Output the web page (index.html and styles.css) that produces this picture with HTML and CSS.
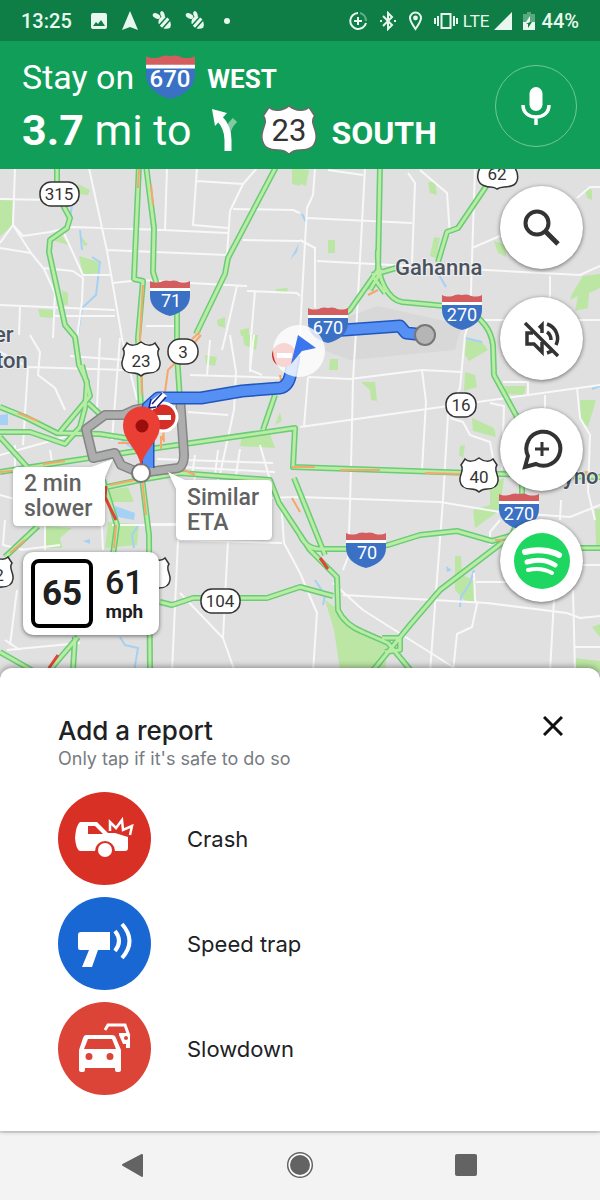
FILE: index.html
```html
<!DOCTYPE html>
<html lang="en">
<head>
<meta charset="utf-8">
<meta name="viewport" content="width=device-width, initial-scale=1">
<title>Navigation</title>
<link rel="stylesheet" href="styles.css">
</head>
<body>
<svg class="symbols" aria-hidden="true">
  <symbol id="interstate" viewBox="0 0 42 36">
    <path fill="#3a71c5" d="M1 10H41V16C41 26 33 33 21 36C9 33 1 26 1 16Z"/>
    <path fill="#d45d60" d="M1 1C5 3 10 3 14 1Q17 0 21 1Q25 0 28 1C32 3 37 3 41 1V9H1Z"/>
    <path fill="#fff" d="M1 8H41V11H1Z"/>
  </symbol>
  <symbol id="us-route" viewBox="0 0 42 38">
    <path d="M7 3C10 6 16 6 21 2C26 6 32 6 35 3L39 9C35 14 41 18 40 25C39 32 34 33 29 33C25 33 23 34 21 36C19 34 17 33 13 33C8 33 3 32 2 25C1 18 7 14 3 9Z"/>
  </symbol>
  <symbol id="bee" viewBox="0 0 20 20">
    <ellipse cx="4.500" cy="5" rx="4" ry="2.500" transform="rotate(25 4.500 5)" fill="currentColor"/>
    <ellipse cx="10.500" cy="3.500" rx="2" ry="3.500" transform="rotate(-20 10.500 3.500)" fill="currentColor"/>
    <g transform="rotate(42 13 12)"><path fill="currentColor" d="M7 9Q8 7 9.500 7V17Q8 17 7 15Q5 12 7 9ZM11 6.500H14V17.500H11ZM15.500 7Q19 9 20 12Q19 15 15.500 17Z"/></g>
  </symbol>
</svg>

<div class="phone">
  <div class="status">
    <span class="status-time">13:25</span>
    <div class="status-group status-left">
      <svg width="18" height="18" viewBox="0 0 18 18"><path fill="currentColor" fill-rule="evenodd" d="M3 1H15Q17 1 17 3V15Q17 17 15 17H3Q1 17 1 15V3Q1 1 3 1ZM3 14H15L11 8L8 12L6 10Z"/></svg>
      <svg width="18" height="20" viewBox="0 0 18 20"><path fill="currentColor" d="M9 0L17 19L9 16L1 19Z"/></svg>
      <svg width="20" height="20"><use href="#bee"/></svg>
      <svg width="20" height="20"><use href="#bee"/></svg>
      <svg width="18" height="18" viewBox="0 0 18 18"><circle cx="9" cy="9" r="3" fill="currentColor"/></svg>
    </div>
    <div class="status-group status-right">
      <svg width="20" height="20" viewBox="0 0 20 20" fill="none" stroke="currentColor" stroke-width="2"><path d="M10 2A8 8 0 1 0 18 12M10 6V14M6 10H14"/><path opacity=".4" d="M12 2A8 8 0 0 1 18 10"/></svg>
      <svg width="18" height="20" viewBox="0 0 18 20" fill="none" stroke="currentColor" stroke-width="2"><path d="M4 5L13 14L9 18V2L13 6L4 15M1 10H3M15 10H17"/></svg>
      <svg width="15" height="20" viewBox="0 0 15 20"><path fill="none" stroke="currentColor" stroke-width="2" d="M7.500 18C4 13 2 10 2 7A5.500 5.500 0 0 1 13 7C13 10 11 13 7.500 18Z"/><circle cx="7.500" cy="7" r="2.400" fill="currentColor"/></svg>
      <svg width="24" height="20" viewBox="0 0 24 20" fill="none" stroke="currentColor" stroke-width="2"><rect x="7.500" y="3" width="9" height="14"/><path d="M4 5V15M1 7V13M20 5V15M23 7V13"/></svg>
      <span class="status-lte">LTE</span>
      <svg width="18" height="18" viewBox="0 0 18 18"><path fill="currentColor" d="M18 0V18H0Z"/></svg>
      <svg width="12" height="20" viewBox="0 0 12 20"><path opacity=".35" fill="currentColor" d="M4 1H8V3H12V11H0V3H4Z"/><path fill="currentColor" d="M0 11H12V19H0Z"/><path fill="#0e7e46" d="M7 11H9L5 17V13H3Z"/><path fill="currentColor" d="M7 5V11H3Z"/></svg>
      <span class="status-percent">44%</span>
    </div>
  </div>

  <header class="directions">
    <div class="steps">
      <div class="step step-now">
        <span>Stay on</span>
        <svg width="53" height="44" viewBox="0 0 53 44" class="step-shield"><use href="#interstate" width="53" height="44"/><text x="26" y="32">670</text></svg>
        <b>WEST</b>
      </div>
      <div class="step step-next">
        <span><b>3.7</b> mi to</span>
        <svg class="turn" width="28" height="44" viewBox="0 0 28 44" fill="none"><path stroke="#85c9a3" stroke-width="6" d="M16 28C17 19 20 16 24 12"/><path stroke="#fff" stroke-width="7" d="M17 43V32C17 22 14 16 8 10"/><path fill="#fff" d="M1 1L16 5L4 18Z"/></svg>
        <svg class="step-us" width="60" height="54" viewBox="0 0 60 54"><use href="#us-route" width="60" height="54"/><text x="30" y="38">23</text></svg>
        <b class="south">SOUTH</b>
      </div>
    </div>
    <button class="mic" aria-label="Voice search">
      <svg width="32" height="42" viewBox="0 0 32 42" fill="none"><rect x="9.500" y="2" width="13" height="24" rx="6.500" fill="#fff"/><path stroke="#fff" stroke-width="3.500" d="M3 20C3 28 9 32 16 32S29 28 29 20M16 32V40"/></svg>
    </button>
  </header>

  <main class="map">
    <svg class="map-canvas" viewBox="0 169 600 511" preserveAspectRatio="xMidYMin slice" role="img" aria-label="Map with the route to downtown">
      <defs>
        <g id="highways">
          <path d="M57 165V190L64 207L70 218L67 228L50 240L49 252L65 325L75 337L79 365L87 382L85 408L80 427L65 444L30 432L0 432"/>
          <path d="M139 165L134 279L143 281L138 338L141 410M141 470L149 535L150 672"/>
          <path d="M146 165L154 228L153 272L157 285M177 310V355L180 400"/>
          <path d="M277 165L228 258L225 274L196 334M275 395L263 430"/>
          <path d="M380 165L378 270L350 310L330 325M378 250C376 282 390 300 402 302L445 306L466 310Q490 322 493 345L494 375L517 417L522 480V510L512 535M374 278L385 293M382 270L370 290M372 275L396 268"/>
          <path d="M487 185L458 228L447 232L438 262"/>
          <path d="M0 472L63 462L150 449L295 428L293 467L500 474L600 477"/>
          <path d="M0 407L25 417L57 433L100 434L145 441M0 437L30 470M60 432L90 396L82 365M88 403L103 417"/>
          <path d="M107 487L140 480L180 473L270 480L279 503L310 550L337 577L338 610Q345 625 363 632L388 643L412 672M294 478L325 555M300 535Q306 548 318 549L345 549L388 545L420 535L457 531L492 541L520 533M503 542L440 590L410 625L375 668L370 672M382 638H400V650L385 652"/>
          <path d="M160 602L172 605L193 598H267L300 587L333 596M580 548H600"/>
          <path d="M0 652L35 672M78 637L48 672M75 637L73 670M38 526L5 557M103 480L117 525L113 555"/>
        </g>
      </defs>
      <rect y="160" width="600" height="530" fill="#e0e0e0"/>
      <path fill="#d8d8d8" d="M350 316L378 306L462 325L455 350L350 360L310 345Z"/>
      <g fill="#bce6a4">
        <path d="M0 200L13 200L12 226L0 236ZM78 184L90 190L88 195L79 194ZM80 235L88 245L84 246ZM54 241L62 236L69 245ZM79 256L99 262L98 273L83 275ZM62 290L68 293V305L63 305ZM38 309L54 310V318L40 317ZM292 169H300V186L292 184ZM300 169L309 170L306 186L300 184ZM217 320L225 317V328L218 326ZM275 289L288 288L287 292L276 291ZM240 330L249 328V336H241Z"/>
        <path d="M428 182L435 182L437 195L430 193ZM328 240H335V253H328ZM434 237L440 238L436 258L430 256ZM494 241L505 244L506 257L498 253ZM585 188L592 190V200L587 198ZM572 294L583 276L600 274V288L589 293L588 308L575 311L578 296L570 300ZM330 359H338V370H329ZM361 382H375L377 401L371 400L370 390ZM466 340L482 342L488 350L469 361L465 355ZM465 372L475 375L477 387L464 391ZM504 386H526L524 395L506 394ZM472 418L494 428L496 437L473 431ZM460 446L465 445L463 458L459 455ZM580 400L596 400L588 427L581 421ZM490 483L504 478L500 510L475 528L473 510L490 505Z"/>
        <path d="M325 600L342 612Q354 633 387 646L385 672L340 670L334 630ZM455 556H461L462 575L474 580L475 603L464 600L455 590ZM575 658L600 661V672H575ZM592 627L600 624V637ZM46 526L72 528L60 538L62 548H46ZM108 522L139 524L137 545L105 548ZM110 490L128 487L134 502H108ZM242 436L270 434L275 448L240 446ZM275 425L280 412L282 421ZM205 355L217 357L215 366L206 364ZM243 335L258 335L256 350L244 345ZM595 509H600V545H596Z"/>
      </g>
      <g fill="#a4d1f4">
        <path d="M290 260L299 243L297 252ZM115 506L135 513L134 520L112 516ZM83 541L90 539V544ZM446 566L452 570L447 572ZM98 452L108 449L110 459L100 462ZM0 415L8 414V425H0Z"/>
        <path class="river" d="M72 205L69 225M80 230L82 250M92 257L100 262L96 295L82 308L78 333M302 214L306 222M439 275L446 287M474 570L470 583L461 597L460 607M139 524L132 535L134 548M120 637L125 645L138 648L134 672M592 389L600 386M115 435L135 450M465 338L482 342M315 580L325 595L323 605"/>
      </g>
      <g class="streets">
        <path d="M15 168L13 225L31 253L44 269L55 293L53 338M89 168L107 251L122 338L137 400M0 248L31 253M0 199L50 200M0 243L13 225L23 236L50 232L72 227L163 230L228 233M107 250L227 255M167 168L165 230M197 168L193 225L228 228M197 181L243 184L257 168M243 184L230 211L227 255M233 209L293 210L300 213M243 240L300 241M113 283L140 280L190 283L247 286M247 291L297 293L300 296M255 291L251 338L250 372M237 286L225 338L222 350M43 268L73 271L83 278L82 301L77 338M63 231L83 275L110 275M0 305L115 310M20 307L19 335M55 316L115 316M146 326H174"/>
        <path d="M315 168L313 195L307 208L302 295L300 335M365 168L357 315L353 380L352 425L350 505L348 557L343 570M307 218L412 223M328 170L363 175M408 173L415 183L412 263M420 170L447 193L450 235M475 168L470 320L465 335L460 388L448 415L443 500L430 672M472 248L500 236M317 261L580 275L600 266M300 240L315 248V308M550 276V297M577 198L590 187H600M482 320H600"/>
        <path d="M300 427L427 409L600 385M308 377L350 379L422 370L462 372M308 377L304 427M422 370L426 402L422 470M450 418L463 422L470 435L490 442L493 458M190 500L300 497L440 502L500 512L570 517L600 505M577 388L580 418L590 435L588 492L595 520M490 403L504 406L502 470M545 395V430M503 382H528V394M343 595L487 603L567 613L580 618L600 616M333 583L363 610L453 667M300 573L317 613L313 672M474 573L475 600L477 604L472 627L457 634L453 672M476 582H545M573 590L575 672M554 600L550 672M574 647H600M561 500L560 520M500 520L490 532V545M580 565H600"/>
        <path d="M0 352L28 367L125 370M70 356L123 360M30 335L40 352L38 375L55 388L65 410M28 367L23 445M100 338L97 408M120 338L112 440M190 375L285 378M230 335L236 372L234 410L220 474M254 335L250 370L262 375M210 340L207 375M157 459L273 463M180 467L275 472M195 455L192 475M218 450L215 475M240 449L236 475M260 445L270 480M0 455L90 430M50 450L55 480M15 445V470M178 540L172 672M228 540L223 638M180 593L223 638L235 672M150 524H180M180 540L282 543M281 500L284 543L300 573M7 650L80 643M17 590L10 645M5 520L3 545L25 550M45 490V550M0 495L18 500M100 490L103 550M5 640L20 650M195 477L192 492M218 476V485M112 525H180M188 412L228 415M60 545L20 550M60 500L62 520"/>
      </g>
      <use href="#highways" class="casing"/>
      <use href="#highways" class="core"/>
      <g class="slow">
        <path d="M139 169L138 188M151 185L153 205M143 285L140 337L142 395M201 335L188 350L168 370L165 392M192 339L200 332M18 413L38 421M43 464L65 461M0 472L12 471M292 467H315M340 470L380 470M425 473L460 474M580 473L588 472M283 390L280 375M118 443L135 443M162 440L165 428M110 485L135 480M180 468L195 475M25 540L10 553M116 525L114 548M142 478L146 515M292 498L300 512M162 415L164 442M495 540L503 540M161 449V436M368 295L378 290"/>
      </g>
      <path class="jam" d="M106 486L105 497L116 520M320 558L328 569M58 655L49 668"/>

      <g class="alternate"><path class="alt-casing" d="M150 407L134 410L123 415L105 415L86 429L93 458L115 453L121 465L140 473L178 468Q184 466 184 454L180 398"/><path class="alt-core" d="M150 407L134 410L123 415L105 415L86 429L93 458L115 453L121 465L140 473L178 468Q184 466 184 454L180 398"/></g>
      <g class="route">
        <path class="route-casing" d="M148 468V407L158 398L201 398L242 391L280 388Q289 386 291 372L294 355M330 331L400 326L406 333L425 335"/>
        <path class="route-core" d="M148 468V407L158 398L201 398L242 391L280 388Q289 386 291 372L294 355M330 331L400 326L406 333L425 335"/>
      </g>
      <circle cx="425" cy="335" r="10" fill="#b5b5b5" stroke="#777" stroke-width="2"/>

      <g class="town"><text x="395" y="275">Gahanna</text><text x="-6" y="342">er</text><text x="-4" y="368">ton</text><text x="563" y="484">yno</text></g>

      <g class="interstates">
        <use href="#interstate" x="149" y="280" width="42" height="36"/><text x="171" y="307">71</text>
        <use href="#interstate" x="307" y="307" width="42" height="36"/><text x="328" y="334">670</text>
        <use href="#interstate" x="441" y="294" width="42" height="36"/><text x="462" y="321">270</text>
        <use href="#interstate" x="345" y="532" width="42" height="36"/><text x="367" y="559">70</text>
        <use href="#interstate" x="498" y="493" width="42" height="36"/><text x="519" y="520">270</text>
      </g>
      <g class="plates">
        <use href="#us-route" x="120" y="340" width="42" height="38"/><text x="141" y="367">23</text>
        <use href="#us-route" x="458" y="456" width="42" height="38"/><text x="479" y="483">40</text>
        <use href="#us-route" x="130" y="555" width="42" height="38"/>
        <use href="#us-route" x="-27" y="554" width="42" height="38"/><text x="-1" y="581">2</text>
        <rect x="40" y="182" width="39" height="24" rx="11"/><text x="59" y="200">315</text>
        <rect x="168" y="339" width="30" height="25" rx="12"/><text x="183" y="358">3</text>
        <rect x="446" y="393" width="30" height="24" rx="11"/><text x="461" y="411">16</text>
        <rect x="201" y="589" width="39" height="24" rx="11"/><text x="220" y="607">104</text>
        <path d="M482 165C475 174 477 184 485 186C490 188 493 186 497 189C502 186 505 188 511 186C519 184 520 174 513 165Z"/><text x="497" y="180">62</text>
      </g>

      <circle cx="163" cy="417" r="14" fill="#d42e27" stroke="#fff" stroke-width="3"/><path fill="#fff" d="M156 415H171V420H156Z"/>
      <path fill="#fff" d="M162 392L167 396L155 409L149 407L151 401Z"/><path fill="none" stroke="#12238c" stroke-width="1.500" d="M162 393L152 404M166 397L157 407M151 399L149 408L156 407"/>
      <circle cx="141" cy="473" r="9" fill="#fff" stroke="#777" stroke-width="2"/>
      <path fill="#ea3f34" d="M141 467C139 449 123 442 123 425A18 18 0 0 1 160 425C160 442 144 449 141 467Z"/><circle cx="142" cy="426" r="6.500" fill="#9c0e0c"/>

      <circle cx="284" cy="355" r="12" fill="#d42e27"/><path fill="#fff" d="M277 353H292V358H277Z"/>
      <circle class="puck" cx="299" cy="351" r="26"/><path fill="#3b76ef" d="M298 335L316 348L302 351L291 364Z"/>

      <g class="callout">
        <path d="M18 467H91L113 459L105 477V521Q105 526 100 526H18Q13 526 13 521V472Q13 467 18 467Z"/>
        <text x="24" y="491">2 min</text><text x="24" y="516">slower</text>
        <path d="M176 489L168 472L185 480H267Q272 480 272 485V535Q272 540 267 540H181Q176 540 176 535Z"/>
        <text x="187" y="505">Similar</text><text x="187" y="530">ETA</text>
      </g>
    </svg>

    <div class="speed">
      <span class="limit">65</span>
      <span class="current"><b>61</b><small>mph</small></span>
    </div>

    <div class="map-actions">
      <button aria-label="Search"><svg width="42" height="42" viewBox="0 0 42 42" fill="none" stroke="currentColor"><circle cx="16" cy="16" r="11.500" stroke-width="4"/><path stroke-width="5" d="M24 24L37 37"/></svg></button>
      <button aria-label="Sound off"><svg width="42" height="42" viewBox="0 0 42 42" fill="none" stroke="currentColor" stroke-width="3.500"><path d="M4 5L37 38M18 10L21 7V15M12 15H6V26H13L21 34V24M26 6C35 9 39 19 35 27M26 35C29 34 31 33 32 32M26 14C29 16 30 19 30 22"/></svg></button>
      <button aria-label="Add a report"><svg width="42" height="42" viewBox="0 0 42 42" fill="none" stroke="currentColor"><path stroke-width="4" d="M4 38L7 27A17 17 0 1 1 15 35Z"/><path stroke-width="3" d="M21 13V27M14 20H28"/></svg></button>
      <button aria-label="Spotify"><svg width="58" height="58" viewBox="0 0 58 58" fill="none" stroke="#fff" stroke-linecap="round"><circle cx="29" cy="29" r="28" fill="#1ed760" stroke="none"/><path stroke-width="6" d="M12 20C23 17 37 18 46 23"/><path stroke-width="5" d="M14 30C24 27 34 28 42 33"/><path stroke-width="4" d="M15 38C24 36 32 37 39 41"/></svg></button>
    </div>
  </main>

  <section class="report">
    <div class="report-head">
      <div>
        <h1>Add a report</h1>
        <p>Only tap if it's safe to do so</p>
      </div>
      <button class="close" aria-label="Close"><svg width="20" height="20" viewBox="0 0 20 20" fill="none" stroke="currentColor" stroke-width="3"><path d="M1 1L19 19M19 1L1 19"/></svg></button>
    </div>
    <div class="report-list">
      <button class="report-item">
        <svg class="crash" viewBox="0 0 93 93"><path fill="#fff" fill-rule="evenodd" d="M22 30H39L50 41H57L70 45V56Q70 59 67 59H57A10 10 0 0 0 37 59H22Q18 58 17 46Q18 33 22 30ZM30 34V42H45L37 34Z"/><circle cx="47" cy="58" r="7" fill="#fff"/><path fill="none" stroke="#fff" stroke-width="2.500" d="M52 39V30L58 36L64 28L65 38L74 34L72 43"/></svg>
        <span>Crash</span>
      </button>
      <button class="report-item">
        <svg class="trap" viewBox="0 0 93 93"><path fill="#fff" d="M23 35H52V53H40L34 70H24L31 53H22Q20 53 20 51V38Q20 35 23 35Z"/><path fill="none" stroke="#fff" stroke-width="4" d="M57 34Q65 44 57 54M64 27Q79 44 64 61"/></svg>
        <span>Speed trap</span>
      </button>
      <button class="report-item">
        <svg class="slowdown" viewBox="0 0 93 93"><path fill="#fff" fill-rule="evenodd" d="M28 33H54Q57 33 58 36L63 48V68Q63 70 61 70H59Q57 70 57 68V66H27V68Q27 70 25 70H23Q21 70 21 68V48L25 36Q26 33 28 33ZM30 37L26 47H58L54 37ZM31 51A3.500 3.500 0 1 0 31 58A3.500 3.500 0 1 0 31 51ZM52 51A3.500 3.500 0 1 0 52 58A3.500 3.500 0 1 0 52 51Z"/><path fill="none" stroke="#fff" stroke-width="3" d="M47 28L50 23H67L71 34"/><path fill="#fff" fill-rule="evenodd" d="M61 31H71L72 34V46H68V42H65L61 33ZM68 34A2 2 0 1 0 68 38A2 2 0 1 0 68 34Z"/></svg>
        <span>Slowdown</span>
      </button>
    </div>
  </section>

  <nav class="system-nav" aria-label="System">
    <button aria-label="Back"><svg width="28" height="28" viewBox="0 0 28 28"><path fill="#636363" stroke="#636363" stroke-width="2" stroke-linejoin="round" d="M22 4V25L3 14Z"/></svg></button>
    <button aria-label="Home"><svg width="28" height="28" viewBox="0 0 28 28"><circle cx="14" cy="14" r="12.300" fill="#fff" stroke="#636363" stroke-width="1.500"/><circle cx="14" cy="14" r="10" fill="#636363"/></svg></button>
    <button aria-label="Recent apps"><svg width="28" height="28" viewBox="0 0 28 28"><rect x="3" y="3" width="22" height="22" rx="2" fill="#636363"/></svg></button>
  </nav>
</div>
</body>
</html>
```
FILE: styles.css
```css
* { box-sizing: border-box; }
body { margin: 0; font-family: Roboto, "Liberation Sans", sans-serif; }
button { padding: 0; border: 0; background: none; font: inherit; color: inherit; cursor: pointer; }
svg { display: block; flex: none; }
.symbols { position: absolute; width: 0; height: 0; }
.phone { display: flex; flex-direction: column; min-height: 100vh; background: #fff; }

.status { display: flex; align-items: center; height: 41px; padding: 0 21px; background: #0e7e46; color: #e9f8ef; }
.status-time { font-size: 20px; font-weight: 500; }
.status-group { display: flex; align-items: center; }
.status-left { gap: 13px; margin-left: 18px; }
.status-right { gap: 11px; margin-left: auto; }
.status-lte { margin-left: -6px; font-size: 17px; }
.status-lte + svg { margin-left: -7px; }
.status-percent { margin-left: -4px; font-size: 20px; font-weight: 500; }

.directions { display: flex; align-items: center; justify-content: space-between; height: 128px; padding: 2px 23px 0 22px; background: #119e58; color: #fff; }
.step { display: flex; align-items: center; white-space: nowrap; }
.step-now { height: 48px; gap: 10px; font-size: 34px; }
.step-now b { font-size: 26px; margin-top: 4px; }
.step-next { height: 58px; font-size: 43px; }
.step-shield text { fill: #fff; font-size: 24px; font-weight: 500; text-anchor: middle; }
.turn { margin-left: 20px; }
.step-us { margin: 0 12px 0 20px; fill: #fff; stroke: #6b6768; stroke-width: 1px; }
.step-us text { fill: #333; stroke: none; font-size: 31px; text-anchor: middle; }
.south { font-size: 32px; margin-top: 6px; }
.mic { display: grid; place-items: center; width: 82px; height: 82px; border: 1px solid #72c698; border-radius: 50%; }

.map { position: relative; flex: 1; min-height: 499px; }
.map-canvas { position: absolute; top: 0; left: 0; width: 100%; height: calc(100% + 12px); }
.streets { fill: none; stroke: #f8f8f8; stroke-width: 2; stroke-linejoin: round; }
.river { fill: none; stroke: #a4d1f4; stroke-width: 2; }
.casing, .core, .slow, .jam { fill: none; stroke-linejoin: round; }
.casing { stroke: #6acb78; stroke-width: 6; }
.core { stroke: #b8eda3; stroke-width: 3; }
.slow { stroke: #f7a66c; stroke-width: 2; }
.jam { stroke: #de4438; stroke-width: 3; }
.alternate, .route { fill: none; stroke-linejoin: round; }
.alt-casing { stroke: #858585; stroke-width: 10; }
.alt-core { stroke: #adadad; stroke-width: 7; }
.route-casing { stroke: #2057bd; stroke-width: 13; }
.route-core { stroke: #5790f4; stroke-width: 10; }
.town { fill: #49535f; stroke: #eee; stroke-width: 2; paint-order: stroke; font-size: 22px; font-weight: 500; }
.interstates text { fill: #fff; font-size: 18px; text-anchor: middle; }
.plates { fill: #fff; stroke: #333; stroke-width: 1.5; }
.plates text { fill: #333; stroke: none; font-size: 17px; text-anchor: middle; }
.puck { fill: #fff; fill-opacity: .8; }
.callout path { fill: #fff; filter: drop-shadow(0 1px 2px #0004); }
.callout text { fill: #626262; font-size: 23px; font-weight: 500; }

.speed { position: absolute; left: 23px; bottom: 33px; display: flex; align-items: center; gap: 12px; height: 83px; padding: 0 15px 0 8px; border-radius: 10px; background: #fff; box-shadow: 0 1px 4px #0008; color: #202020; }
.limit { display: grid; place-items: center; width: 62px; height: 69px; border: 4px solid #000; border-radius: 8px; font-size: 35px; font-weight: 700; }
.current { display: flex; flex-direction: column; align-items: center; }
.current b { font-size: 34px; line-height: 36px; font-weight: 500; }
.current small { font-size: 19px; line-height: 24px; font-weight: 700; }

.map-actions { position: absolute; top: 17px; right: 17px; display: flex; flex-direction: column; gap: 28px; }
.map-actions button { display: grid; place-items: center; width: 83px; height: 83px; border-radius: 50%; background: #fff; box-shadow: 0 1px 4px #0008; color: #333; }

.report { position: relative; padding: 48px 37px 36px 58px; border-radius: 12px 12px 0 0; background: #fff; box-shadow: 0 -1px 6px #0006; color: #202124; font-family: Inter, Roboto, sans-serif; }
.report-head { display: flex; justify-content: space-between; align-items: flex-start; }
.report h1 { margin: 0; font-size: 26px; line-height: 30px; font-weight: 500; }
.report p { margin: 0; font-size: 18px; line-height: 26px; color: #777b80; }
.close { color: #111; }
.report-list { display: flex; flex-direction: column; gap: 12px; margin-top: 20px; }
.report-item { display: flex; align-items: center; gap: 36px; font-size: 22px; text-align: left; }
.report-item svg { width: 93px; height: 93px; border-radius: 50%; }
.crash { background: #d93025; }
.trap { background: #1967d2; }
.slowdown { background: #db4437; }

.system-nav { display: flex; justify-content: space-between; align-items: center; height: 70px; padding: 0 120px 4px; border-top: 2px solid #dedede; background: #f3f3f3; }
```
